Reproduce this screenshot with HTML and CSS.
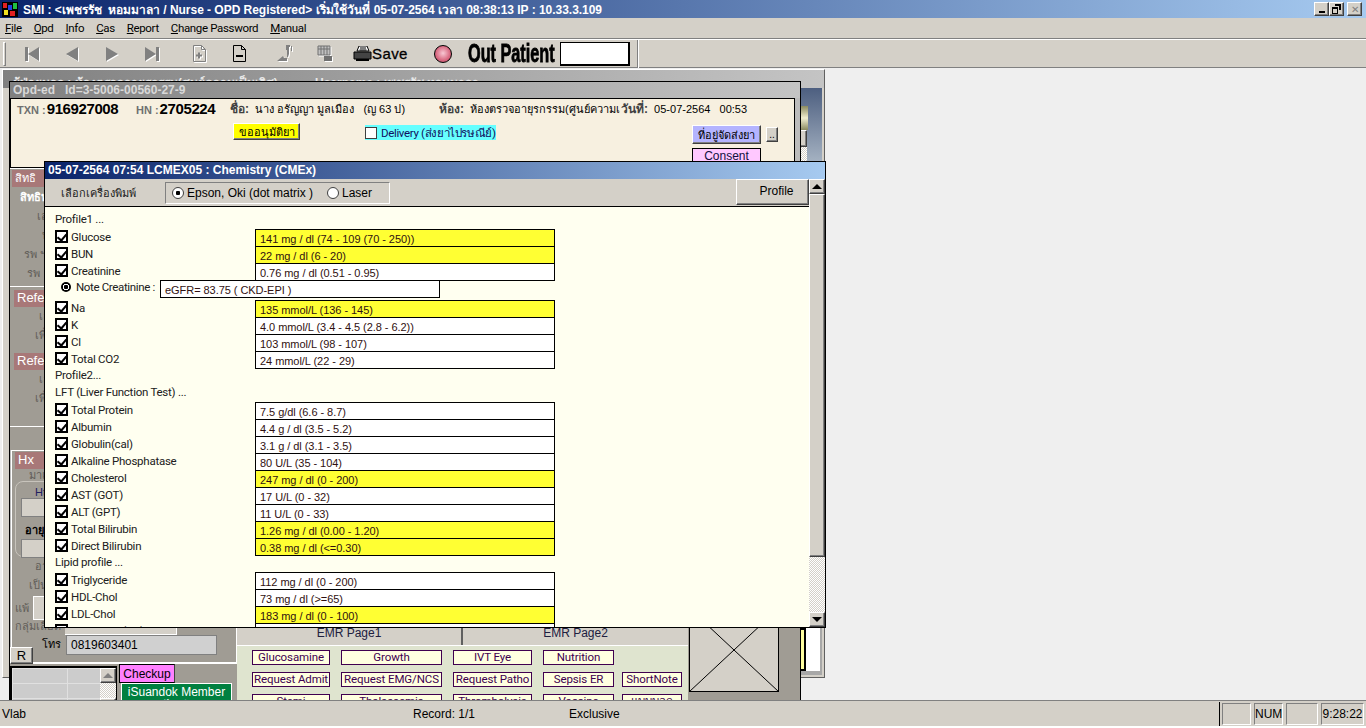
FILE: index.html
```html
<!DOCTYPE html>
<html lang="th">
<head>
  <meta charset="UTF-8" />
  <title>SMI</title>
  <link rel="stylesheet" href="styles.css">
</head>
<body>
  <div class="titlebar">
    <svg class="appicon" width="16" height="15" viewBox="0 0 16 15">
      <rect width="16" height="15" fill="#000"/>
      <rect x="1" y="1" width="4" height="5" fill="#e02020"/>
      <rect x="6" y="3" width="4" height="5" fill="#2040e0"/>
      <rect x="11" y="1" width="4" height="6" fill="#20c040"/>
      <rect x="2" y="8" width="4" height="5" fill="#f0e020"/>
      <rect x="8" y="9" width="5" height="5" fill="#e02020"/>
    </svg>
    <span class="titletext">SMI : &lt;เพชรรัช  หอมมาลา / Nurse - OPD Registered&gt; เริ่มใช้วันที่ 05-07-2564 เวลา 08:38:13 IP : 10.33.3.109</span>
    <div class="winbtns">
      <span class="winbtn raised"><i class="min"></i></span>
      <span class="winbtn raised">
        <svg width="9" height="10" viewBox="0 0 9 10"><path d="M3 0h6v6H7V2H3zM0 3h6v7H0zM1 5v4h4V5z" fill="#000" fill-rule="evenodd"/></svg>
      </span>
      <span class="winbtn raised close">✕</span>
    </div>
  </div>

  <div class="menubar">
    <span><u>F</u>ile</span>
    <span><u>O</u>pd</span>
    <span><u>I</u>nfo</span>
    <span><u>C</u>as</span>
    <span><u>R</u>eport</span>
    <span><u>C</u>hange Password</span>
    <span><u>M</u>anual</span>
  </div>

  <div class="toolbar">
    <span class="grip"></span>
    <span class="tool off"><svg width="15" height="14" viewBox="0 0 15 14"><path d="M0 0h3v14H0zM14 0v14L3 7z" fill="#808080"/></svg></span>
    <span class="tool off"><svg width="13" height="14" viewBox="0 0 13 14"><path d="M12 0v14L0 7z" fill="#808080"/></svg></span>
    <span class="tool off"><svg width="13" height="14" viewBox="0 0 13 14"><path d="M0 0v14l12-7z" fill="#808080"/></svg></span>
    <span class="tool off"><svg width="15" height="14" viewBox="0 0 15 14"><path d="M0 0l11 7L0 14zM11 0h3v14h-3z" fill="#808080"/></svg></span>
    <span class="tool off tool-docs"><svg width="13" height="17" viewBox="0 0 13 17"><path d="M.5.5h8l4 4v12H.5z" fill="none" stroke="#808080"/><path d="M8.5.5v4h4" fill="none" stroke="#808080"/><path d="M3 10.500h6M6 7.500v6" stroke="#808080" stroke-width="2"/></svg></span>
    <span class="tool"><svg width="13" height="17" viewBox="0 0 13 17"><path d="M.5.5h8l4 4v12H.5z" fill="none" stroke="#000"/><path d="M8.500.5v4h4" fill="none" stroke="#000"/><path d="M3 11h7" stroke="#000" stroke-width="2"/></svg></span>
    <span class="tool off tool-sew"><svg width="16" height="18" viewBox="0 0 16 18"><path d="M9 0h4v2h-1v7l-1 3h-1V5H9zM14 1h1v5h-1zM0 16l6-5 1 2 3 0v3z" fill="#808080"/></svg></span>
    <span class="tool off"><svg width="16" height="17" viewBox="0 0 16 17"><path d="M1 1h12v9H1z" fill="#c0c0c0" stroke="#707070"/><path d="M1 4h12M4 1v9M7 1v9M10 1v9" stroke="#707070"/><path d="M7 11h8v5H7z" fill="#707070"/></svg></span>
    <span class="save">
      <svg width="19" height="16" viewBox="0 0 19 16"><path d="M6 0h8l2 5H4z" fill="#fff" stroke="#000"/><path d="M1 6h17v7H1z" fill="#444" stroke="#000"/><path d="M3 13h13v2H3z" fill="#000"/><path d="M7 2h6M6.500 4h7" stroke="#000"/></svg>
      <b>Save</b>
    </span>
    <span class="ball"></span>
    <b class="outpatient">Out Patient</b>
    <span class="opbox"></span>
    <span class="toolsep"></span>
  </div>

  <div class="desktop">

    <!-- window at the back -->
    <div class="win backwin">
      <div class="backtitle">
        <span class="backloc">ผู้ป่วยนอก : ห้องตรวจอายุรกรรม(ศูนย์ความเป็นเลิศ)</span>
        <span>Username : เพชรรัช หอมมาลา</span>
      </div>
      <div class="backside">
        <div class="steel">
          <div class="steelblock"></div>
          <div class="steelbtn raised"></div>
          <div class="dither steeldither"></div>
        </div>
        <div class="backfoot"><div class="backyellow"></div></div>
      </div>
    </div>

    <!-- opd window -->
    <div class="win opdwin">
      <div class="opdtitle">Opd-ed &nbsp; Id=3-5006-00560-27-9</div>
      <div class="opdhead">
        <div class="headrow">
          <span><i class="cap">TXN :</i><b class="num">916927008</b></span>
          <span><i class="cap">HN :</i><b class="num">2705224</b></span>
          <span><i class="cap2">ชื่อ:</i> &nbsp;นาง อรัญญา มูลเมือง &nbsp; (ญ 63 ป)</span>
          <span class="clipcell"><i class="cap2">ห้อง:</i> &nbsp;ห้องตรวจอายุรกรรม(ศูนย์ความเ</span>
          <span><i class="cap2">วันที่:</i> &nbsp;05-07-2564 &nbsp; 00:53</span>
        </div>
        <div class="headrow2">
          <button class="approve raised">ขออนุมัติยา</button>
          <label class="delivery"><span class="plainchk"></span>Delivery (ส่งยาไปรษณีย์)</label>
          <div class="headactions">
            <div class="addrline">
              <button class="addr raised">ที่อยู่จัดส่งยา</button>
              <button class="dots raised">..</button>
            </div>
            <div class="consent">Consent</div>
          </div>
        </div>
      </div>

      <div class="opdmain">
        <div class="leftcol">
          <div class="sect sect-right">
            <div class="redtag">สิทธิ</div>
            <div class="ln ln-main">สิทธิหลัก</div>
            <div class="ln ln-a">เลขที่</div>
            <div class="ln ln-b">บัตร</div>
            <div class="ln ln-c">รพ ฯ</div>
            <div class="ln ln-d">รพ</div>
          </div>
          <div class="sect sect-refer">
            <div class="redtag tag-big">Refer</div>
            <div class="ln ln-a">เลขที่</div>
            <div class="ln ln-e">เพื่อ</div>
            <div class="redtag tag-big tag-next">Refer</div>
            <div class="ln ln-a">เลขที่</div>
            <div class="ln ln-e">เพื่อ</div>
          </div>
          <div class="sectgap"></div>
          <div class="sect sect-hx">
            <div class="redtag tag-big">Hx</div>
            <div class="ln ln-f">มาเพื่อ</div>
            <div class="roundbox">
              <div class="ht">Ht</div>
              <div class="greybox"></div>
              <div class="ageline">อายุ</div>
              <div class="greybox"></div>
            </div>
            <div class="ln ln-g">อาการ</div>
            <div class="ln ln-h">เป็น</div>
            <div class="allergy"><span>แพ้</span><div class="greybox allergybox"></div></div>
            <div class="bloodline"><span>กลุ่มเลือด</span><div class="bloodbox"></div></div>
            <div class="phoneline"><span>โทร</span><div class="phonebox">0819603401</div></div>
            <button class="rbtn raised">R</button>
          </div>
          <div class="leftbottom">
            <div class="listbox">
              <div class="listcells"></div>
              <div class="listscroll">
                <div class="sbtn raised"><i class="arrup"></i></div>
                <div class="dither listdither"></div>
                <div class="sbtn raised"></div>
              </div>
            </div>
            <div class="memberbtns">
              <div class="checkup">Checkup</div>
              <div class="member">iSuandok Member<br>(ไม่มี)</div>
            </div>
          </div>
        </div>

        <div class="emr">
          <div class="emrtabs">
            <div class="emrtab">EMR Page1</div>
            <div class="emrtab emrtab2">EMR Page2</div>
          </div>
          <div class="emrgrid">
            <span>Glucosamine</span><span>Growth</span><span>IVT Eye</span><span>Nutrition</span><em></em>
            <span>Request Admit</span><span>Request EMG/NCS</span><span>Request Patho</span><span>Sepsis ER</span><span>ShortNote</span>
            <span>Stemi</span><span>Thalassemia</span><span>Thrombolysis</span><span>Vaccine</span><span>แบบบอก</span>
          </div>
        </div>

        <div class="photocol">
          <svg class="photo" width="90" height="84" viewBox="0 0 90 84">
            <rect x=".5" y=".5" width="89" height="83" fill="#d4d0c8" stroke="#000"/>
            <path d="M0 0L90 84M90 0L0 84" stroke="#000"/>
          </svg>
        </div>
      </div>
    </div>

    <!-- lab result dialog -->
    <div class="win labwin">
      <div class="labtitle">05-07-2564 07:54 LCMEX05 : Chemistry (CMEx)</div>
      <div class="labwrap">
        <div class="labcontent">
          <div class="printbar">
            <span class="printlabel">เลือกเครื่องพิมพ์</span>
            <div class="printgroup">
              <span class="winradio on"></span><span class="printopt">Epson, Oki (dot matrix )</span>
              <span class="winradio"></span><span>Laser</span>
            </div>
            <button class="profilebtn raised">Profile</button>
          </div>
          <div class="labbody">
            <div class="heading">Profile1 ...</div>
            <div class="row"><span class="chk"></span><span>Glucose</span><div class="res hi">141 mg / dl (74 - 109 (70 - 250))</div></div>
            <div class="row"><span class="chk"></span><span>BUN</span><div class="res hi">22 mg / dl (6 - 20)</div></div>
            <div class="row"><span class="chk"></span><span>Creatinine</span><div class="res">0.76 mg / dl (0.51 - 0.95)</div></div>
            <div class="noterow"><span class="radio"></span><span class="notelabel">Note Creatinine :</span><div class="res notebox">eGFR= 83.75 ( CKD-EPI )</div></div>
            <div class="row"><span class="chk"></span><span>Na</span><div class="res hi">135 mmol/L (136 - 145)</div></div>
            <div class="row"><span class="chk"></span><span>K</span><div class="res">4.0 mmol/L (3.4 - 4.5 (2.8 - 6.2))</div></div>
            <div class="row"><span class="chk"></span><span>Cl</span><div class="res">103 mmol/L (98 - 107)</div></div>
            <div class="row"><span class="chk"></span><span>Total CO2</span><div class="res">24 mmol/L (22 - 29)</div></div>
            <div class="heading">Profile2...</div>
            <div class="heading">LFT (Liver Function Test) ...</div>
            <div class="row"><span class="chk"></span><span>Total Protein</span><div class="res">7.5 g/dl (6.6 - 8.7)</div></div>
            <div class="row"><span class="chk"></span><span>Albumin</span><div class="res">4.4 g / dl (3.5 - 5.2)</div></div>
            <div class="row"><span class="chk"></span><span>Globulin(cal)</span><div class="res">3.1 g / dl (3.1 - 3.5)</div></div>
            <div class="row"><span class="chk"></span><span>Alkaline Phosphatase</span><div class="res">80 U/L (35 - 104)</div></div>
            <div class="row"><span class="chk"></span><span>Cholesterol</span><div class="res hi">247 mg / dl (0 - 200)</div></div>
            <div class="row"><span class="chk"></span><span>AST (GOT)</span><div class="res">17 U/L (0 - 32)</div></div>
            <div class="row"><span class="chk"></span><span>ALT (GPT)</span><div class="res">11 U/L (0 - 33)</div></div>
            <div class="row"><span class="chk"></span><span>Total Bilirubin</span><div class="res hi">1.26 mg / dl (0.00 - 1.20)</div></div>
            <div class="row"><span class="chk"></span><span>Direct Bilirubin</span><div class="res hi">0.38 mg / dl (&lt;=0.30)</div></div>
            <div class="heading">Lipid profile ...</div>
            <div class="row"><span class="chk"></span><span>Triglyceride</span><div class="res">112 mg / dl (0 - 200)</div></div>
            <div class="row"><span class="chk"></span><span>HDL-Chol</span><div class="res">73 mg / dl (&gt;=65)</div></div>
            <div class="row"><span class="chk"></span><span>LDL-Chol</span><div class="res hi">183 mg / dl (0 - 100)</div></div>
            <div class="row"><span class="chk"></span><span>VLDL-Chol(cal)</span><div class="res"></div></div>
          </div>
        </div>
        <div class="labscroll">
          <div class="sbtn raised"><i class="arrup dark"></i></div>
          <div class="thumb raised"></div>
          <div class="dither labdither"></div>
          <div class="sbtn raised"><i class="arrdown"></i></div>
        </div>
      </div>
    </div>
  </div>

  <div class="statusbar">
    <span class="st-vlab">Vlab</span>
    <span class="st-record">Record: 1/1</span>
    <span class="st-excl">Exclusive</span>
    <div class="st-panels">
      <span class="st-p st-a"></span>
      <span class="st-p st-b">NUM</span>
      <span class="st-p st-c"></span>
      <span class="st-p st-d">9:28:22</span>
    </div>
  </div>
</body>
</html>
```

FILE: styles.css
```css
* {
  box-sizing: border-box;
}
body {
  margin: 0;
  width: 1366px;
  height: 728px;
  overflow: hidden;
  display: flex;
  flex-direction: column;
  background-color: #efefef;
  color: #000;
  font-family: 'Liberation Sans', 'Noto Sans', sans-serif;
  font-size: 12px;
}
i {
  font-style: normal;
}
button {
  font-family: inherit;
  padding: 0;
}
.raised {
  background-color: #d4d0c8;
  border: 1px solid;
  border-color: #fff #404040 #404040 #fff;
  box-shadow: inset -1px -1px 0 #808080;
}
.dither {
  background: repeating-conic-gradient(#d4d0c8 0 25%, #fff 0 50%) 0 0 / 2px 2px;
}

/* title bar */
.titlebar {
  flex: none;
  height: 18px;
  display: flex;
  align-items: center;
  padding-left: 2px;
  background: linear-gradient(to right, #0a246a, #a6caf0);
}
.appicon {
  flex: none;
}
.titletext {
  margin-left: 5px;
  color: #fff;
  font-weight: bold;
  font-size: 12px;
  letter-spacing: -.03px;
  white-space: pre;
}
.winbtns {
  margin-left: auto;
  display: flex;
  padding-right: 4px;
}
.winbtn {
  width: 15px;
  height: 14px;
  display: flex;
  align-items: center;
  justify-content: center;
}
.winbtn.close {
  margin-left: 3px;
  color: #808080;
  font-size: 10px;
}
.winbtn .min {
  width: 6px;
  height: 2px;
  margin-top: 6px;
  background-color: #000;
}

/* menu */
.menubar {
  flex: none;
  height: 21px;
  display: flex;
  align-items: center;
  gap: 12px;
  padding-left: 5px;
  background-color: #d4d0c8;
  border-bottom: 1px solid #808080;
  font-family: Roboto, 'Liberation Sans', sans-serif;
  font-size: 11.500px;
  letter-spacing: -.35px;
}

/* toolbar */
.toolbar {
  flex: none;
  height: 29px;
  display: flex;
  align-items: center;
  background-color: #d4d0c8;
  border-top: 1px solid #fff;
  border-bottom: 1px solid #808080;
}
.grip {
  width: 3px;
  height: 24px;
  margin: 0 6px 0 3px;
  border: 1px solid;
  border-color: #fff #808080 #808080 #fff;
}
.tool {
  width: 40px;
  display: flex;
  justify-content: center;
}
.tool.off svg {
  filter: drop-shadow(1px 1px 0 #fff);
}
.tool-docs {
  margin-left: 7px;
}
.tool-sew {
  margin-left: 6px;
}
.save {
  display: flex;
  align-items: center;
  margin-left: 8px;
}
.save b {
  font-size: 15px;
  letter-spacing: .4px;
  font-weight: normal;
  -webkit-text-stroke: .3px #000;
}
.ball {
  width: 18px;
  height: 18px;
  margin-left: 26px;
  border: 1px solid #000;
  border-radius: 50%;
  background: radial-gradient(circle at 50% 45%, #f8c8d4, #d86880 60%, #a84860);
}
.outpatient {
  width: 87px;
  margin-left: 16px;
  font-size: 25px;
  line-height: 25px;
  -webkit-text-stroke: .8px #000;
  white-space: nowrap;
  transform: scaleX(.65);
  transform-origin: left center;
}
.opbox {
  width: 70px;
  height: 24px;
  margin-left: 5px;
  background-color: #fff;
  border: 1px solid #000;
  border-right-width: 2px;
  border-bottom-width: 2px;
}
.toolsep {
  width: 2px;
  height: 28px;
  margin-left: 7px;
  border-left: 1px solid #808080;
  border-right: 1px solid #fff;
}

/* desktop and its windows */
.desktop {
  flex: none;
  height: 632px;
  position: relative;
  overflow: hidden;
  background-color: #efefef;
}
.win {
  position: absolute;
}
.backwin {
  left: 2px;
  top: 1px;
  width: 823px;
  height: 609px;
  background-color: #d4d0c8;
  border: 1px solid;
  border-color: #fff #606060 #606060 #fff;
}
.backtitle {
  height: 18px;
  padding: 3px 0 0 10px;
  display: flex;
  color: #e8e8e8;
  font-weight: bold;
  background: linear-gradient(to right, #808080, #c4c4c4);
  white-space: nowrap;
}
.backloc {
  width: 302px;
}
.backside {
  margin-left: 797px;
  width: 22px;
}
.steel {
  height: 540px;
  padding-top: 18px;
  background: linear-gradient(to bottom, #4d5f80 0, #b8c4d0 90px);
}
.steelblock {
  width: 8px;
  height: 24px;
  background: linear-gradient(to bottom, #8a8a60, #f0eed0 50%, #8a8a60);
}
.steelbtn {
  width: 7px;
  height: 17px;
}
.steeldither {
  width: 7px;
  height: 30px;
}
.backfoot {
  height: 47px;
  background-color: #fff;
  border-right: 2px solid #a8a8a8;
  border-bottom: 4px solid #a8a8a8;
}
.backyellow {
  width: 6px;
  height: 43px;
  background-color: #ffffa0;
  border: 2px solid #000;
  border-left: 0;
}

.opdwin {
  left: 9px;
  top: 13px;
  width: 792px;
  height: 640px;
  background-color: #bcbcbc;
  border: 1px solid #000;
}
.opdtitle {
  height: 16px;
  padding: 1px 0 0 3px;
  color: #d8d8d8;
  font-weight: bold;
  background: linear-gradient(to right, #808080, #c4c4c4);
}
.opdhead {
  width: 785px;
  height: 70px;
  background-color: #f7f0e0;
  border: 1px solid #000;
  font-size: 11px;
}
.headrow {
  height: 13px;
  padding-left: 6px;
  display: grid;
  grid-template-columns: 119px 94px 209px 182px auto;
  align-items: center;
  white-space: nowrap;
}
.clipcell {
  overflow: hidden;
}
.cap {
  color: #707070;
  font-weight: bold;
  font-size: 11px;
  margin-right: 1px;
}
.cap2 {
  color: #404040;
  font-weight: bold;
  font-size: 12px;
}
.num {
  font-size: 15px;
  letter-spacing: -.4px;
}
.headrow2 {
  display: flex;
  align-items: flex-start;
  padding-left: 222px;
  margin-top: 11px;
}
.approve {
  width: 67px;
  height: 17px;
  background-color: #ffff00;
  font-size: 11px;
  line-height: 14px;
}
.delivery {
  width: 131px;
  height: 15px;
  margin: 2px 0 0 65px;
  display: flex;
  align-items: center;
  background-color: #66ffff;
  color: #101060;
  font-family: Roboto, 'Liberation Sans', sans-serif;
  font-size: 11.500px;
  letter-spacing: -.35px;
  white-space: nowrap;
}
.plainchk {
  flex: none;
  width: 12px;
  height: 12px;
  margin-right: 4px;
  background-color: #fff;
  border: 1px solid #404040;
}
.headactions {
  margin-left: auto;
  margin-right: 16px;
  margin-top: 2px;
  width: 86px;
}
.addrline {
  display: flex;
  justify-content: space-between;
  align-items: center;
}
.addr {
  width: 69px;
  height: 19px;
  background-color: #b4b4ff;
  font-size: 11px;
}
.dots {
  width: 12px;
  height: 15px;
  font-size: 10px;
}
.consent {
  width: 69px;
  height: 20px;
  margin-top: 4px;
  text-align: center;
  background-color: #ffc8ff;
  border: 1px solid #000;
  color: #101040;
  font-size: 12px;
}

.opdmain {
  display: flex;
  align-items: flex-start;
}
.leftcol {
  width: 227px;
  flex: none;
}
.sect {
  position: relative;
  background-color: #a09c94;
  color: #605c58;
  font-size: 11px;
}
.sect-right {
  height: 118px;
  border-top: 1px solid #fff;
  padding: 1px 0 0 2px;
}
.sect-refer {
  height: 140px;
  border-top: 1px solid #fff;
  padding: 3px 0 0 4px;
}
.sectgap {
  height: 24px;
  background-color: #a09c94;
  border-top: 1px solid #fff;
}
.sect-hx {
  height: 214px;
  margin-left: 1px;
  padding: 1px 0 0 3px;
  border: 1px solid #fff;
  border-bottom-width: 2px;
}
.redtag {
  width: 50px;
  height: 17px;
  padding-left: 3px;
  background-color: #a87878;
  color: #fff;
  line-height: 16px;
}
.tag-big {
  font-size: 13px;
}
.tag-next {
  margin-top: 8px;
}
.ln {
  height: 19px;
  line-height: 19px;
  white-space: nowrap;
}
.ln-main {
  margin-top: 1px;
  padding-left: 8px;
  color: #fff;
  font-weight: bold;
}
.ln-a {
  padding-left: 25px;
}
.ln-b {
  padding-left: 30px;
}
.ln-c {
  padding-left: 12px;
}
.ln-d {
  padding-left: 15px;
}
.ln-e {
  padding-left: 21px;
}
.ln-f {
  height: 12px;
  line-height: 12px;
  padding-left: 14px;
}
.ln-g {
  padding-left: 20px;
}
.ln-h {
  padding-left: 14px;
}
.roundbox {
  width: 200px;
  height: 76px;
  padding: 4px 0 0 5px;
  border: 1px solid #c8c4bc;
  border-radius: 8px;
}
.ht {
  padding-left: 14px;
  color: #202060;
}
.ageline {
  padding-left: 4px;
  color: #000;
  font-weight: bold;
  margin-top: 4px;
}
.greybox {
  width: 160px;
  height: 19px;
  background-color: #d4d0c8;
  border: 1px solid #808080;
}
.allergy {
  display: flex;
  gap: 4px;
  padding-top: 1px;
  align-items: center;
}
.allergybox {
  height: 24px;
  border-color: #fff;
}
.bloodline {
  display: flex;
  height: 15px;
  white-space: nowrap;
  line-height: 13px;
}
.bloodline span {
  width: 50px;
}
.bloodbox {
  width: 112px;
  height: 15px;
  background-color: #d4d0c8;
  border-bottom: 1px solid #fff;
  border-right: 1px solid #fff;
}
.phoneline {
  display: flex;
  padding-left: 27px;
  height: 19px;
  color: #000;
}
.phoneline span {
  width: 24px;
  line-height: 19px;
}
.phonebox {
  width: 151px;
  height: 20px;
  padding-left: 4px;
  line-height: 18px;
  color: #000;
  background-color: #d0d0d0;
  border: 1px solid #808080;
  font-size: 12px;
}
.rbtn {
  position: absolute;
  left: -2px;
  bottom: -2px;
  width: 23px;
  height: 17px;
  font-size: 13px;
  line-height: 13px;
}
.leftbottom {
  display: flex;
  height: 40px;
  background-color: #a09c94;
}
.listbox {
  width: 107px;
  height: 40px;
  margin-top: 2px;
  display: flex;
  background-color: #cccccc;
  border: 2px solid #000;
  border-right-width: 1px;
  border-bottom: 0;
}
.listcells {
  width: 88px;
  background:
    linear-gradient(to right, #e0e0e0 1px, transparent 1px) 0 0 / 55px 100%,
    linear-gradient(to bottom, #e0e0e0 1px, transparent 1px) 0 0 / 100% 15px;
}
.listscroll {
  width: 16px;
}
.sbtn {
  flex: none;
  width: 16px;
  height: 15px;
  display: flex;
  align-items: center;
  justify-content: center;
}
.listdither {
  height: 15px;
}
.arrup {
  width: 0;
  height: 0;
  border: 5px solid transparent;
  border-top: 0;
  border-bottom: 5px solid #808080;
}
.arrup.dark {
  border-bottom-color: #000;
}
.arrdown {
  width: 0;
  height: 0;
  border: 5px solid transparent;
  border-bottom: 0;
  border-top: 5px solid #000;
}
.memberbtns {
  margin-left: 2px;
  width: 115px;
}
.checkup {
  width: 56px;
  height: 19px;
  text-align: center;
  line-height: 18px;
  font-size: 12px;
  background-color: #ff80ff;
  border: 1px solid #000;
  border-right-color: #404040;
}
.member {
  width: 111px;
  height: 40px;
  margin: 0 0 0 2px;
  padding-top: 1px;
  text-align: center;
  color: #fff;
  background-color: #008040;
  border: 1px solid #fff;
  line-height: 14px;
}

.emr {
  width: 451px;
  flex: none;
  margin-top: 460px;
  background-color: #dfe4cf;
  height: 90px;
}
.emrtabs {
  display: flex;
  height: 18px;
  background-color: #d4d0c8;
  border-bottom: 1px solid #fff;
  font-size: 12px;
}
.emrtab {
  width: 226px;
  text-align: center;
  color: #202040;
  border-right: 2px solid #606060;
  line-height: 10px;
}
.emrtab2 {
  width: 225px;
  border-right: 0;
}
.emrgrid {
  display: grid;
  grid-template-columns: 78px 101px 79px 71px 60px;
  column-gap: 11px;
  row-gap: 7px;
  grid-auto-rows: 15px;
  padding: 4px 0 0 15px;
}
.emrgrid span {
  border: 1px solid #400050;
  background-color: #ffffe0;
  color: #400050;
  text-align: center;
  font-family: Roboto, 'Liberation Sans', sans-serif;
  line-height: 12px;
  font-size: 11.500px;
  letter-spacing: -.1px;
  white-space: nowrap;
  overflow: hidden;
}
.emrgrid span:nth-child(5n) {
  margin: 0 3px 0 -3px;
}
.photocol {
  flex: 1;
  height: 550px;
  padding: 440px 0 0 1px;
  background-color: #a09c94;
}
.photo {
  display: block;
}

/* lab dialog */
.labwin {
  left: 44px;
  top: 93px;
  width: 782px;
  height: 467px;
  display: flex;
  flex-direction: column;
  border: 1px solid #000;
  background-color: #d4d0c8;
}
.labtitle {
  flex: none;
  height: 17px;
  padding-left: 3px;
  color: #fff;
  font-weight: bold;
  line-height: 16px;
  white-space: nowrap;
  background: linear-gradient(to right, #0a246a, #a6caf0);
}
.labwrap {
  flex: 1;
  display: flex;
  min-height: 0;
}
.labcontent {
  flex: none;
  width: 764px;
  display: flex;
  flex-direction: column;
}
.printbar {
  flex: none;
  height: 28px;
  display: flex;
  align-items: center;
  border-bottom: 1px solid #000;
}
.printlabel {
  width: 120px;
  padding-left: 16px;
  font-size: 11px;
  color: #202020;
}
.printgroup {
  width: 225px;
  height: 22px;
  display: flex;
  align-items: center;
  padding: 1px 0 0 6px;
  border: 1px solid;
  border-color: #808080 #fff #fff #808080;
  white-space: nowrap;
}
.winradio {
  width: 12px;
  height: 12px;
  margin-right: 3px;
  flex: none;
  border-radius: 50%;
  background-color: #fff;
  border: 1px solid #404040;
}
.winradio.on {
  background: radial-gradient(circle, #000 0 2px, #fff 2.500px);
}
.printopt {
  width: 140px;
}
.profilebtn {
  margin-left: auto;
  width: 73px;
  height: 26px;
  margin-top: -2px;
  padding: 0 0 2px 8px;
  font-size: 12px;
}
.labbody {
  flex: 1;
  min-height: 0;
  overflow: hidden;
  padding: 5px 0 0 10px;
  background-color: #fffff0;
  color: #202020;
  font-family: Roboto, 'Liberation Sans', sans-serif;
  font-size: 11.500px;
  letter-spacing: -.25px;
}
.heading {
  height: 17px;
  line-height: 14px;
}
.row {
  height: 17px;
  display: grid;
  grid-template-columns: 16px 184px 300px;
  line-height: 16px;
}
.chk {
  width: 13px;
  height: 13px;
  margin-top: 1px;
  position: relative;
  background-color: #fff;
  border: 2px solid #000;
}
.chk::after {
  content: "";
  position: absolute;
  left: 2px;
  top: 0;
  width: 4px;
  height: 7px;
  border: solid #000;
  border-width: 0 2px 2px 0;
  transform: rotate(40deg);
}
.res {
  height: 18px;
  padding: 2px 0 0 4px;
  overflow: hidden;
  border: 1px solid #000;
  background-color: #fff;
  color: #301010;
  font-family: 'Liberation Sans', sans-serif;
  font-size: 11px;
  letter-spacing: -.05px;
  line-height: 14px;
  white-space: nowrap;
}
.res.hi {
  background-color: #ffff33;
}
.noterow {
  height: 20px;
  display: flex;
  margin-left: 6px;
  line-height: 14px;
}
.radio {
  width: 10px;
  height: 10px;
  margin-top: 2px;
  flex: none;
  border-radius: 50%;
  background: radial-gradient(circle, #000 0 2px, #fff 2.500px 3px, #000 3.500px);
}
.notelabel {
  width: 89px;
  padding-left: 5px;
  white-space: nowrap;
  letter-spacing: -.35px;
}
.notebox {
  width: 280px;
}
.labscroll {
  flex: none;
  width: 16px;
  display: flex;
  flex-direction: column;
}
.thumb {
  flex: none;
  height: 363px;
}
.labdither {
  flex: 1;
}

/* status bar */
.statusbar {
  flex: none;
  height: 28px;
  display: flex;
  align-items: center;
  background-color: #d4d0c8;
  border-top: 1px solid #808080;
  border-bottom: 2px solid #fff;
}
.st-vlab {
  margin-left: 2px;
  width: 411px;
}
.st-record {
  width: 156px;
}
.st-panels {
  margin-left: auto;
  margin-right: 2px;
  height: 24px;
  display: flex;
  gap: 3px;
  padding-left: 2px;
  border-left: 1px solid #000;
}
.st-p {
  height: 22px;
  margin-top: 1px;
  border: 1px solid;
  border-color: #808080 #fff #fff #808080;
  line-height: 20px;
  text-align: center;
}
.st-a {
  width: 29px;
}
.st-b {
  width: 29px;
}
.st-c {
  width: 32px;
}
.st-d {
  width: 43px;
}
```
